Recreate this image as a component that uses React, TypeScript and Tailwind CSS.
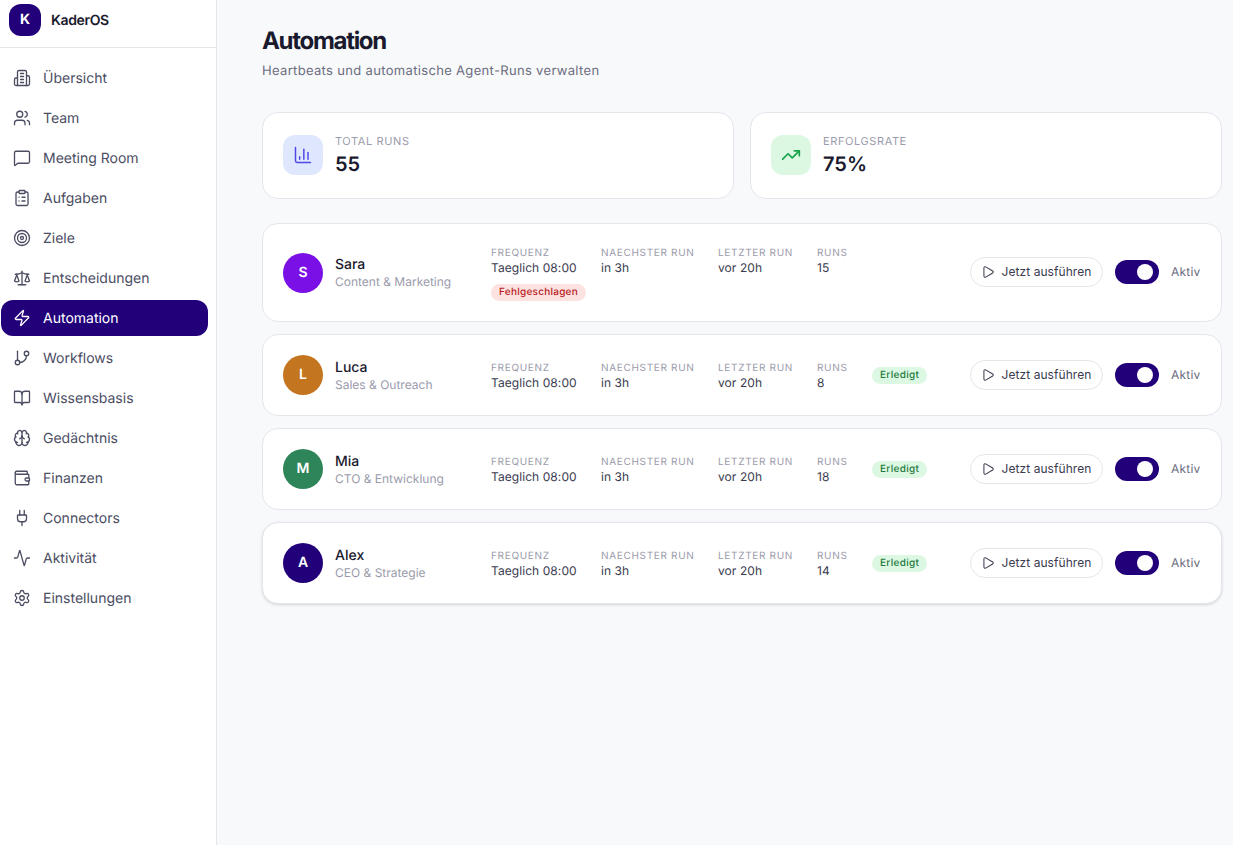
import { Users, MessageSquare, ClipboardList, Target, Scale, Zap, GitBranch, BookOpen, Brain, Wallet, Plug, Activity, Settings, Play, ChartColumn, TrendingUp } from "lucide-react";

function BuildingIcon({ size = 18, strokeWidth = 2 }: { size?: number; strokeWidth?: number }) {
  return (
    <svg width={size} height={size} viewBox="0 0 24 24" fill="none" stroke="currentColor" strokeWidth={strokeWidth} strokeLinecap="round" strokeLinejoin="round">
      <path d="M6 22V4a2 2 0 0 1 2-2h8a2 2 0 0 1 2 2v18Z" />
      <path d="M6 12H4a2 2 0 0 0-2 2v6a2 2 0 0 0 2 2h2" />
      <path d="M18 9h2a2 2 0 0 1 2 2v9a2 2 0 0 1-2 2h-2" />
      <path d="M10 6h4" />
      <path d="M10 10h4" />
      <path d="M10 14h4" />
      <path d="M10 18h4" />
    </svg>
  );
}

const nav = [
  { label: "Übersicht", Icon: BuildingIcon },
  { label: "Team", Icon: Users },
  { label: "Meeting Room", Icon: MessageSquare },
  { label: "Aufgaben", Icon: ClipboardList },
  { label: "Ziele", Icon: Target },
  { label: "Entscheidungen", Icon: Scale },
  { label: "Automation", Icon: Zap, active: true },
  { label: "Workflows", Icon: GitBranch },
  { label: "Wissensbasis", Icon: BookOpen },
  { label: "Gedächtnis", Icon: Brain },
  { label: "Finanzen", Icon: Wallet },
  { label: "Connectors", Icon: Plug },
  { label: "Aktivität", Icon: Activity },
  { label: "Einstellungen", Icon: Settings },
];

const rows = [
  { name: "Sara", role: "Content & Marketing", initial: "S", color: "bg-[#7a10e6]", runs: "15", failed: true },
  { name: "Luca", role: "Sales & Outreach", initial: "L", color: "bg-[#c47520]", runs: "8" },
  { name: "Mia", role: "CTO & Entwicklung", initial: "M", color: "bg-[#2f855a]", runs: "18" },
  { name: "Alex", role: "CEO & Strategie", initial: "A", color: "bg-[#22007a]", runs: "14", shadow: true },
];

function Field({ label, value, width }: { label: string; value: string; width: string }) {
  return (
    <div className={`${width} shrink-0`}>
      <div className="pt-px text-[10px] leading-[15px] font-normal tracking-[0.68px] text-[#9a9bab]">{label}</div>
      <div className="text-xs leading-[14px] tracking-[0.07px] text-[#3a3b4f]">{value}</div>
    </div>
  );
}

function Stat({ label, value, icon, iconBg }: { label: string; value: string; icon: React.ReactNode; iconBg: string }) {
  return (
    <div className="flex-1 h-[87px] flex items-center gap-3 px-5 pb-px bg-white border border-[#e5e6ec] rounded-2xl">
      <div className={`w-10 h-10 rounded-xl flex items-center justify-center ${iconBg}`}>{icon}</div>
      <div>
        <div className="text-[11px] leading-[16px] font-normal tracking-[0.6px] text-[#9a9bab]">{label}</div>
        <div className="mt-px text-xl leading-[28px] font-semibold text-[#1a1a2e]">{value}</div>
      </div>
    </div>
  );
}

export default function App() {
  return (
    <div className="flex min-h-[845px] h-[845px] overflow-hidden bg-[#f8f9fb] font-['Inter',sans-serif] antialiased [text-rendering:geometricPrecision]">
      <aside className="w-[217px] shrink-0 bg-white border-r border-[#e5e6ec]">
        <div className="h-[48px] flex items-center gap-[10px] pl-[9px] pb-[7px] border-b border-[#e5e6ec]">
          <div className="w-8 h-8 rounded-xl bg-[#22007a] text-white flex items-center justify-center text-sm font-bold">K</div>
          <span className="pt-px text-sm font-semibold tracking-[-0.35px] text-[#1a1a2e]">KaderOS</span>
        </div>
        <nav className="flex flex-col gap-1 pt-[12px] pl-px pr-2">
          {nav.map(({ label, Icon, active }) => (
            <div key={label} className={`h-9 flex items-center gap-3 pl-3 rounded-xl text-sm font-normal ${active ? "bg-[#22007a] text-white" : "text-[#4b4d63]"}`}>
              <Icon size={18} strokeWidth={1.75} />
              <span className="pt-[2px]">{label}</span>
            </div>
          ))}
        </nav>
      </aside>
      <main className="flex-1 min-w-0 pl-[45px] pr-[11px] pt-[25px]">
        <h1 className="text-2xl leading-[32px] font-bold tracking-[-1.3px] text-[#1a1a2e]">Automation</h1>
        <p className="mt-[6px] text-[13px] leading-[16px] tracking-[0.33px] text-[#6b6d80]">Heartbeats und automatische Agent-Runs verwalten</p>
        <div className="flex gap-4 mt-[33px]">
          <Stat label="TOTAL RUNS" value="55" iconBg="bg-[#dfe7fe]" icon={<ChartColumn size={20} strokeWidth={1.75} className="text-[#4f46e5]" />} />
          <Stat label="ERFOLGSRATE" value="75%" iconBg="bg-[#dcf8e3]" icon={<TrendingUp size={20} strokeWidth={2} className="text-[#16a34a]" />} />
        </div>
        <div className="flex flex-col gap-3 mt-6">
          {rows.map((r) => (
            <div key={r.name} className={`flex items-center px-5 bg-white border border-[#e5e6ec] rounded-2xl ${r.failed ? "h-[99px]" : "h-[82px]"} ${r.shadow ? "shadow-[0_1px_3px_rgba(0,0,0,0.15)]" : ""}`}>
              <div className={`w-10 h-10 shrink-0 rounded-full flex items-center justify-center text-white text-sm font-semibold ${r.color}`}>{r.initial}</div>
              <div className={`ml-3 w-[156px] shrink-0 ${r.failed ? "pb-[2px]" : ""}`}>
                <div className="text-sm leading-[19px] font-medium text-[#1a1a2e]">{r.name}</div>
                <div className="text-xs leading-[15px] text-[#9a9bab]">{r.role}</div>
              </div>
              <div className="flex-1 flex items-center">
                <div className={`w-[110px] shrink-0 ${r.failed ? "self-start" : ""}`}>
                  <Field label="FREQUENZ" value="Taeglich 08:00" width="w-[110px]" />
                  {r.failed && (
                    <span className="inline-block mt-[9px] px-2 h-[17px] rounded-full bg-[#fde2e2] text-[#b91c1c] text-[10px] leading-[17px] font-medium tracking-[0.25px]">Fehlgeschlagen</span>
                  )}
                </div>
                <div className={`flex ${r.failed ? "self-start" : ""}`}>
                  <Field label="NAECHSTER RUN" value="in 3h" width="w-[117px]" />
                  <Field label="LETZTER RUN" value="vor 20h" width="w-[99px]" />
                  <Field label="RUNS" value={r.runs} width="w-[55px]" />
                </div>
                {!r.failed && (
                  <span className="px-2 h-[17px] rounded-full bg-[#dcf8e3] text-[#1f7a3d] text-[10px] leading-[17px] font-medium tracking-[0.3px]">Erledigt</span>
                )}
              </div>
              <div className={`flex items-center shrink-0 ${r.failed ? "pb-[2px]" : ""}`}>
                <button className="h-[30px] w-[133px] flex items-center justify-center gap-[7px] pr-px rounded-[15px] border border-[#e5e6ec] bg-white text-xs font-normal tracking-[0.07px] text-[#3a3b4f]">
                  <Play size={14} strokeWidth={1.75} />
                  <span>Jetzt ausführen</span>
                </button>
                <div className="ml-3 w-11 h-6 rounded-full bg-[#22007a] flex items-center justify-end pr-[6px]">
                  <div className="w-4 h-4 rounded-full bg-white" />
                </div>
                <span className="ml-3 text-xs tracking-[0.2px] text-[#6b6d80] w-[30px]">Aktiv</span>
              </div>
            </div>
          ))}
        </div>
      </main>
    </div>
  );
}
